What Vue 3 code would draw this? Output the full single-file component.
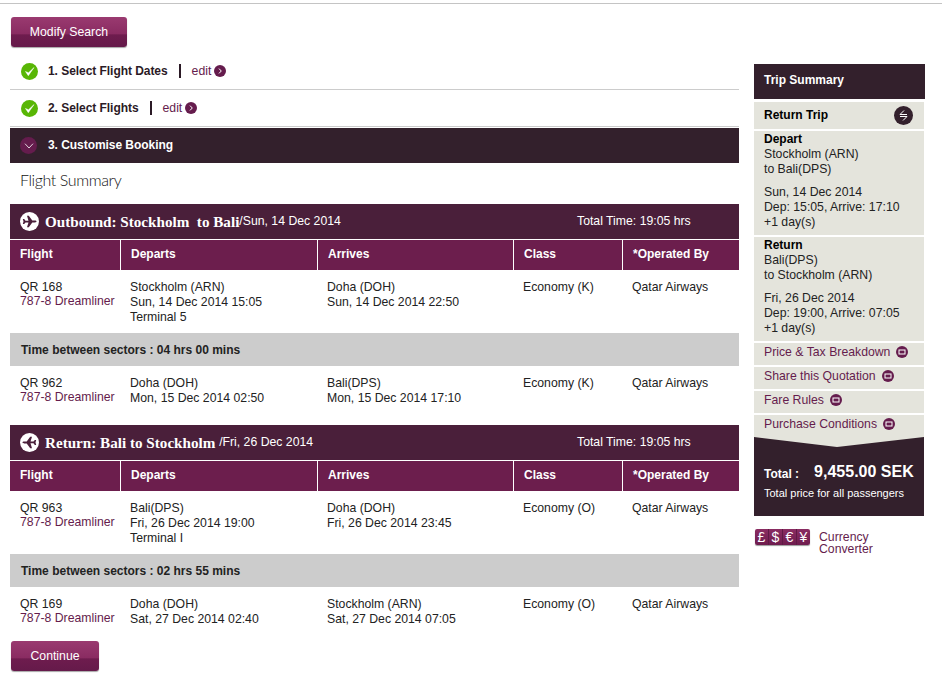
<template>
  <div class="page">
    <main class="left">
      <button class="btn modify">Modify Search</button>

      <div class="step done first">
        <span class="check"><svg width="17" height="17" viewBox="0 0 17 17"><circle cx="8.5" cy="8.5" r="8.5" fill="#58b605"/><path d="M4.500 8.500l2.800 4.200L13 4.600 7.500 9.800z" fill="#fff" stroke="#fff" stroke-width=".5" stroke-linejoin="round"/></svg></span>
        <b>1. Select Flight Dates</b>
        <i class="bar"></i>
        <a class="edit">edit</a>
        <svg class="arrow" width="12" height="12" viewBox="0 0 12 12"><circle cx="6" cy="6" r="6" fill="#651c4d"/><path d="M5 3.6L7.3 6 5 8.4" fill="none" stroke="#fff" stroke-width="1"/></svg>
      </div>
      <div class="step done">
        <span class="check"><svg width="17" height="17" viewBox="0 0 17 17"><circle cx="8.5" cy="8.5" r="8.5" fill="#58b605"/><path d="M4.500 8.500l2.800 4.200L13 4.600 7.500 9.800z" fill="#fff" stroke="#fff" stroke-width=".5" stroke-linejoin="round"/></svg></span>
        <b>2. Select Flights</b>
        <i class="bar"></i>
        <a class="edit">edit</a>
        <svg class="arrow" width="12" height="12" viewBox="0 0 12 12"><circle cx="6" cy="6" r="6" fill="#651c4d"/><path d="M5 3.6L7.3 6 5 8.4" fill="none" stroke="#fff" stroke-width="1"/></svg>
      </div>
      <div class="step current">
        <span class="check"><svg width="17" height="17" viewBox="0 0 17 17"><circle cx="8.5" cy="8.5" r="8.5" fill="#651c4d"/><path d="M5 6.700L9 11l4-4.300" fill="none" stroke="#fff" stroke-width=".8"/></svg></span>
        <b>3. Customise Booking</b>
      </div>

      <h2 class="summary-title">Flight Summary</h2>

      <section v-for="s in sections" :key="s.title" class="leg">
        <header class="leg-head">
          <svg class="plane" width="19" height="19" viewBox="0 0 19 19">
            <circle cx="9.5" cy="9.5" r="9.5" fill="#fff"/>
            <path :transform="s.back ? 'rotate(180 9.5 9.5)' : ''" d="M2.800 7h1.400l1.300 1.700h3L7 3.800h1.800l3.500 4.800h2.500c1 0 1.700.4 1.700.9s-.7.9-1.700.9h-2.500L8.800 15.200H7l1.500-4.800h-3l-1.300 1.700H2.800l.7-2.600z" fill="#4a1f3a"/>
          </svg>
          <span class="leg-title">{{ s.title }}</span><span class="leg-date">{{ s.date }}</span>
          <span class="leg-time">Total Time: 19:05 hrs</span>
        </header>
        <div class="thead">
          <div v-for="h in heads" :key="h">{{ h }}</div>
        </div>
        <template v-for="(f, i) in s.flights" :key="f.no">
          <div class="row">
            <div><div>{{ f.no }}</div><div class="plane-name">787-8 Dreamliner</div></div>
            <div><div>{{ f.from }}</div><div>{{ f.dep }}</div><div v-if="f.term">{{ f.term }}</div></div>
            <div><div>{{ f.to }}</div><div>{{ f.arr }}</div></div>
            <div>{{ f.cls }}</div>
            <div>Qatar Airways</div>
          </div>
          <div v-if="i === 0" class="sector">Time between sectors : {{ s.gap }}</div>
        </template>
      </section>

      <button class="btn continue">Continue</button>
    </main>

    <aside class="right">
      <div class="trip-head">Trip Summary</div>
      <div class="box trip-type">
        <b>Return Trip</b>
        <svg width="19" height="19" viewBox="0 0 19 19"><circle cx="9.5" cy="9.5" r="9.5" fill="#33202c"/><path d="M13 8.500H6l4-4M6 10.500h7l-4 4" fill="none" stroke="#fff" stroke-width="1"/></svg>
      </div>
      <div class="box leg-box">
        <b>Depart</b>
        <div>Stockholm (ARN)</div>
        <div>to Bali(DPS)</div>
        <div class="gap">Sun, 14 Dec 2014</div>
        <div>Dep: 15:05, Arrive: 17:10</div>
        <div>+1 day(s)</div>
      </div>
      <div class="box leg-box">
        <b>Return</b>
        <div>Bali(DPS)</div>
        <div>to Stockholm (ARN)</div>
        <div class="gap">Fri, 26 Dec 2014</div>
        <div>Dep: 19:00, Arrive: 07:05</div>
        <div>+1 day(s)</div>
      </div>
      <div v-for="l in links" :key="l" class="box link">
        <a>{{ l }}</a>
        <svg width="12" height="12" viewBox="0 0 12 12"><circle cx="6" cy="6" r="6" fill="#651c4d"/><rect x="3" y="4" width="6" height="4" fill="none" stroke="#fff" stroke-width="1"/></svg>
      </div>
      <div class="total">
        <svg class="notch" width="170" height="10" viewBox="0 0 170 10" preserveAspectRatio="none"><path d="M0 0L83 10 170 0z" fill="#e4e4dc"/></svg>
        <div class="total-line"><b class="t-label">Total :</b><b class="t-amount">9,455.00 SEK</b></div>
        <div class="t-note">Total price for all passengers</div>
      </div>
      <div class="currency">
        <div class="cur-icons"><span>£</span><span>$</span><span>€</span><span>¥</span></div>
        <a>Currency<br>Converter</a>
      </div>
    </aside>
  </div>
</template>

<script setup>
const heads = ['Flight', 'Departs', 'Arrives', 'Class', '*Operated By']

const sections = [
  {
    title: 'Outbound: Stockholm  to Bali',
    date: '/Sun, 14 Dec 2014',
    gap: '04 hrs 00 mins',
    flights: [
      { no: 'QR 168', from: 'Stockholm (ARN)', dep: 'Sun, 14 Dec 2014 15:05', term: 'Terminal 5', to: 'Doha (DOH)', arr: 'Sun, 14 Dec 2014 22:50', cls: 'Economy (K)' },
      { no: 'QR 962', from: 'Doha (DOH)', dep: 'Mon, 15 Dec 2014 02:50', to: 'Bali(DPS)', arr: 'Mon, 15 Dec 2014 17:10', cls: 'Economy (K)' },
    ],
  },
  {
    title: 'Return: Bali to Stockholm ',
    date: '/Fri, 26 Dec 2014',
    back: true,
    gap: '02 hrs 55 mins',
    flights: [
      { no: 'QR 963', from: 'Bali(DPS)', dep: 'Fri, 26 Dec 2014 19:00', term: 'Terminal I', to: 'Doha (DOH)', arr: 'Fri, 26 Dec 2014 23:45', cls: 'Economy (O)' },
      { no: 'QR 169', from: 'Doha (DOH)', dep: 'Sat, 27 Dec 2014 02:40', to: 'Stockholm (ARN)', arr: 'Sat, 27 Dec 2014 07:05', cls: 'Economy (O)' },
    ],
  },
]

const links = ['Price & Tax Breakdown', 'Share this Quotation', 'Fare Rules', 'Purchase Conditions']
</script>

<style>
html, body { background: #fff; }
</style>

<style scoped>
.page {
  width: 942px;
  height: 686px;
  box-sizing: border-box;
  border-top: 1px solid #c4c4c4;
  margin-top: 3px;
  display: flex;
  align-items: flex-start;
  padding-left: 10px;
  font-family: "Liberation Sans", Arial, sans-serif;
  font-size: 12.25px;
  line-height: 15px;
  color: #222;
  overflow: hidden;
}
b { font-size: 12px; }
a { color: #651c4d; }

.left { width: 729px; display: flex; flex-direction: column; }
.right { width: 171px; margin-left: 15px; margin-top: 60px; display: flex; flex-direction: column; }

.btn {
  display: block;
  height: 30px;
  border: 0;
  border-radius: 3px;
  color: #fff;
  font: 12.25px "Liberation Sans", Arial, sans-serif;
  background: linear-gradient(#9a3a70, #8a2c62 55%, #6e1c4e 60%, #651a4a);
  box-shadow: 0 1px 1px rgba(0, 0, 0, .35);
  padding: 0;
  margin-left: 1px;
}
.modify { width: 116px; margin-top: 13px; }
.continue { width: 88px; margin-top: 14px; }

.step {
  display: flex;
  align-items: center;
  height: 36px;
  padding-left: 11px;
  border-bottom: 1px solid #ccc;
  color: #2b1a26;
}
.step b { letter-spacing: -.05px; }
.step.first { margin-top: 6px; }
.step .check { width: 17px; height: 17px; margin-right: 10px; }
.step svg { display: block; }
.bar { width: 2px; height: 14px; background: #2b1a26; margin: 0 11px; }
.edit { margin-right: 3px; }
.current {
  background: #33202c;
  color: #fff;
  border: 0;
  height: 35px;
  margin-top: 1px;
  padding-left: 10px;
}
.current .check { margin-right: 11px; }
.summary-title {
  margin: 0;
  height: 41px;
  padding-left: 10px;
  font: 300 16px/34px Lato, sans-serif;
  letter-spacing: -.4px;
  color: #111;
}

.leg { margin-bottom: 19px; }
.leg:last-of-type { margin-bottom: 0; }
.leg-head {
  height: 35px;
  display: flex;
  align-items: center;
  padding-left: 10px;
  background: #4a1f3a;
  color: #fff;
  white-space: pre;
}
.plane { margin-right: 6px; }
.leg-title { font: bold 15.15px "Liberation Serif", serif; }
.leg-time { margin-left: auto; width: 162px; }

.thead, .row {
  display: grid;
  grid-template-columns: 111px 197px 196px 109px 116px;
}
.thead {
  background: #6c1e4d;
  color: #fff;
  font-weight: bold;
  font-size: 12px;
  height: 30px;
  margin-top: 1px;
}
.thead > div {
  padding-left: 10px;
  line-height: 28px;
  border-right: 1px solid #fff;
}
.thead > div:last-child { border-right: 0; }
.row { padding-top: 10px; }
.row > div { padding-left: 9px; }
.row > div:first-child { padding-left: 10px; }
.plane-name { color: #651c4d; margin-top: -1px; }
.sector {
  height: 33px;
  line-height: 35px;
  background: #ccc;
  padding-left: 11px;
  font-weight: bold;
  font-size: 12px;
  margin-top: 8px;
}

.trip-head {
  background: #33202c;
  color: #fff;
  font-weight: bold;
  font-size: 12px;
  height: 35px;
  line-height: 33px;
  padding-left: 10px;
  margin-bottom: 3px;
}
.box {
  background: #e4e4dc;
  width: 170px;
  box-sizing: border-box;
  padding-left: 10px;
  margin-bottom: 2px;
  color: #222;
}
.box b { color: #000; }
.trip-type {
  height: 27px;
  display: flex;
  align-items: center;
  justify-content: space-between;
  padding-right: 11px;
}
.leg-box { padding-top: 1px; padding-bottom: 5px; }
.gap { margin-top: 8px; }
.link { height: 22px; display: flex; align-items: flex-start; gap: 6px; padding-top: 2px; }
.link svg { margin-top: 1px; }
.total {
  position: relative;
  background: #33202c;
  color: #fff;
  width: 170px;
  height: 79px;
  box-sizing: border-box;
  padding: 26px 10px 0;
  margin-top: -2px;
}
.notch { position: absolute; left: 0; top: 0; }
.total-line { display: flex; align-items: flex-start; }
.t-label { font-size: 12px; margin-top: 4px; }
.t-amount { font-size: 16px; line-height: 18px; margin-left: 15px; }
.t-note { font-size: 11px; margin-top: 4px; }
.currency { display: flex; margin-top: 13px; margin-left: 1px; }
.cur-icons {
  display: flex;
  width: 55px;
  height: 16px;
  background: linear-gradient(#8a2c62, #6e1c4e);
  border-radius: 2px;
  box-shadow: 0 1px 1px rgba(0, 0, 0, .4);
  color: #fff;
  font-size: 14px;
  line-height: 16px;
}
.cur-icons span { flex: 1; text-align: center; border-right: 1px solid #5f1a45; }
.cur-icons span:last-child { border-right: 0; }
.currency a { margin-left: 9px; line-height: 12px; margin-top: 2px; }
</style>
